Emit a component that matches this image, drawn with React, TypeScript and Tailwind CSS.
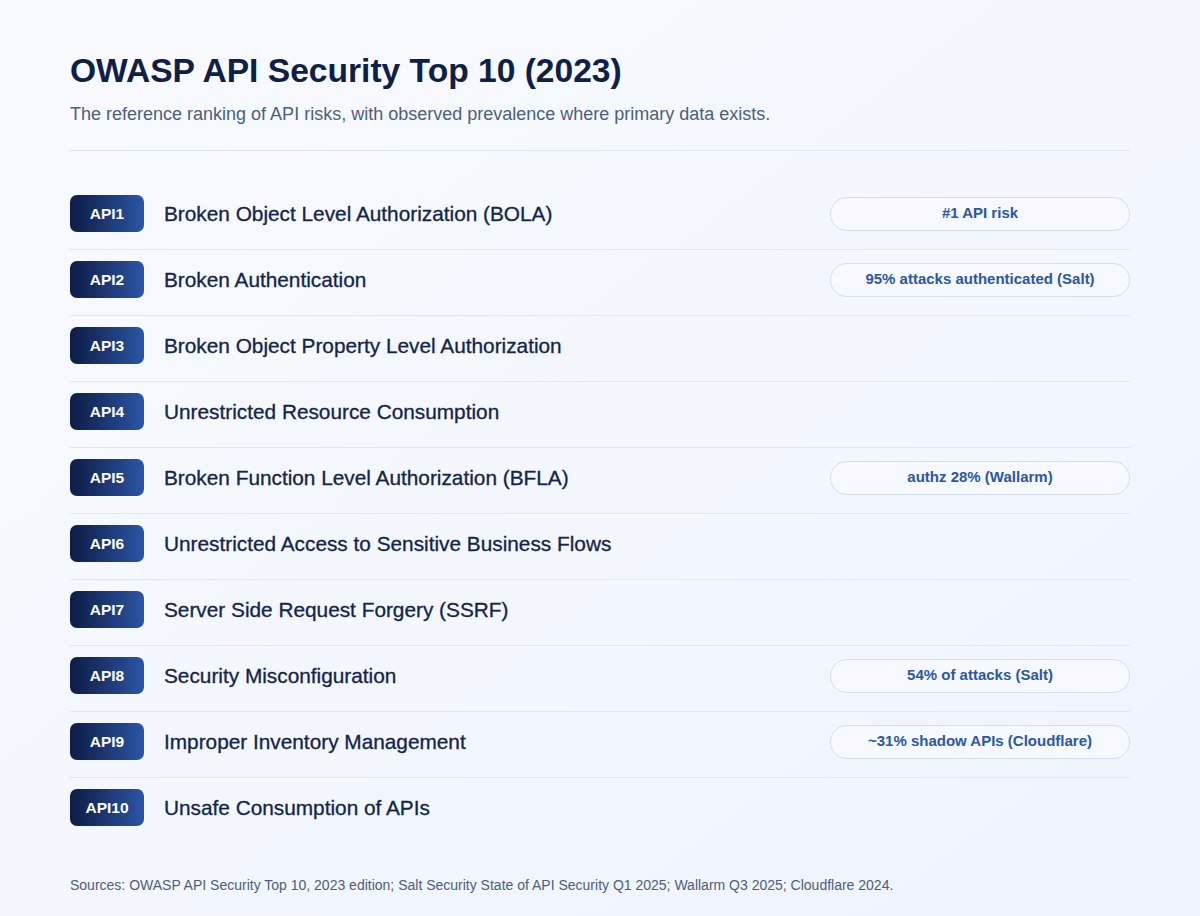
const risks: { code: string; name: string; stat?: string }[] = [
  { code: 'API1', name: 'Broken Object Level Authorization (BOLA)', stat: '#1 API risk' },
  { code: 'API2', name: 'Broken Authentication', stat: '95% attacks authenticated (Salt)' },
  { code: 'API3', name: 'Broken Object Property Level Authorization' },
  { code: 'API4', name: 'Unrestricted Resource Consumption' },
  { code: 'API5', name: 'Broken Function Level Authorization (BFLA)', stat: 'authz 28% (Wallarm)' },
  { code: 'API6', name: 'Unrestricted Access to Sensitive Business Flows' },
  { code: 'API7', name: 'Server Side Request Forgery (SSRF)' },
  { code: 'API8', name: 'Security Misconfiguration', stat: '54% of attacks (Salt)' },
  { code: 'API9', name: 'Improper Inventory Management', stat: '~31% shadow APIs (Cloudflare)' },
  { code: 'API10', name: 'Unsafe Consumption of APIs' },
];

export default function App() {
  return (
    <div
      className="w-[1200px] h-[916px] bg-gradient-to-br from-[#f8fafe] to-[#eff4fd] px-[70px] pt-[51px] text-[#102147]"
      style={{ fontFamily: '"Liberation Sans", Arial, sans-serif' }}
    >
      <div className="border-b border-[#dfe6f3] pb-[24px]">
        <h1 className="text-[33.6px] leading-[40px] font-bold text-[#0f2046]">OWASP API Security Top 10 (2023)</h1>
        <p className="mt-[11px] text-[18px] leading-[24px] text-[#4b5e80]">
          The reference ranking of API risks, with observed prevalence where primary data exists.
        </p>
      </div>

      <div className="mt-[33px]">
        {risks.map((r, i) => (
          <div
            key={r.code}
            className={`flex items-center pt-[11px] pb-[17px] ${i < risks.length - 1 ? 'border-b border-[#e0e7f3]' : ''}`}
          >
            <div className="w-[74px] h-[37px] rounded-[7px] bg-gradient-to-r from-[#0e1d46] to-[#2b56a6] flex items-center justify-center text-white text-[15.5px] font-bold shrink-0">
              {r.code}
            </div>
            <div className="ml-[20px] flex-1 text-[20.8px] text-[#13244a] [-webkit-text-stroke:0.3px_#13244a]">{r.name}</div>
            {r.stat && (
              <div className="w-[300px] h-[34px] rounded-full border border-[#d3dff4] bg-[#f6f9ff] flex items-center justify-center text-[15px] font-bold text-[#2c56a6]">
                {r.stat}
              </div>
            )}
          </div>
        ))}
      </div>

      <p className="mt-[33px] text-[14px] leading-[18px] text-[#4b5e80]">
        Sources: OWASP API Security Top 10, 2023 edition; Salt Security State of API Security Q1 2025; Wallarm Q3 2025; Cloudflare 2024.
      </p>
    </div>
  );
}
